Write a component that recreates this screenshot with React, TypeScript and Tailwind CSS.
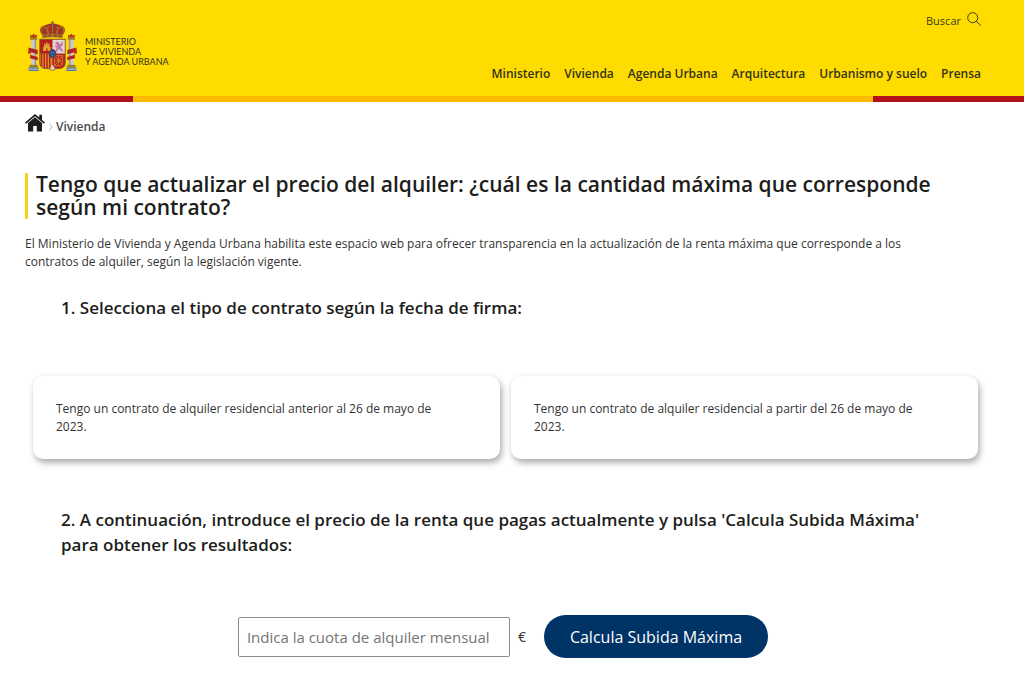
import { useState } from "react";

const navItems = [
  "Ministerio",
  "Vivienda",
  "Agenda Urbana",
  "Arquitectura",
  "Urbanismo y suelo",
  "Prensa",
];

const contracts = [
  { id: "before", text: "Tengo un contrato de alquiler residencial anterior al 26 de mayo de 2023." },
  { id: "after", text: "Tengo un contrato de alquiler residencial a partir del 26 de mayo de 2023." },
];

function Pillar({ side }: { side: "left" | "right" }) {
  return (
    <g transform={side === "right" ? "translate(48 0) scale(-1 1)" : undefined}>
      {/* crown and capital */}
      <path d="M2.500 16.500 2 13.500l2 .8 1.500-2 1.500 2 2-.8-.5 3z" fill="#a93a24" />
      <rect x="2" y="16.500" width="7" height="2" fill="#9c7a2c" />
      {/* shaft */}
      <rect x="3" y="18.500" width="5" height="25" fill="#cfc8c4" />
      <rect x="6.400" y="18.500" width="1.600" height="25" fill="#9d9593" />
      {/* ribbon */}
      <path d="M.5 26 9.500 28.500v4L.5 30zM2 33l7.500 2.200v3.200L2 36.500z" fill="#b3261e" />
      <path d="M0 29h3v3H0z" fill="#c4371d" />
      {/* base and waves */}
      <rect x="1.500" y="43" width="8" height="2.500" fill="#9c7a2c" />
      <rect x=".5" y="45.500" width="10" height="3.500" fill="#55759a" />
      <path d="M.5 47.200h10" stroke="#dfe3e4" strokeWidth=".8" />
    </g>
  );
}

function CoatOfArms() {
  return (
    <svg viewBox="0 0 48 50" className="h-[51px] w-[49px] shrink-0" aria-hidden="true">
      <Pillar side="left" />
      <Pillar side="right" />

      {/* royal crown */}
      <path d="M14.500 14.500C10 10 11.500 5 16.500 4.500 19 3 22 2.500 24 2.500s5 .5 7.500 2c5 .5 6.500 5.500 2 10z" fill="#a8321f" />
      <path
        d="M15 14C11 9 13.500 5 17 6.500S20 12 20 14M33 14c4-5 1.500-9-2-7.500S28 12 28 14M24 3v11M20 5c-2 3-1 6 0 8M28 5c2 3 1 6 0 8"
        fill="none"
        stroke="#98772c"
        strokeWidth="1.100"
      />
      <path d="M24 0v3.500M22.600 1.500h2.800" stroke="#8a6a22" strokeWidth="1" />
      <circle cx="24" cy="3.800" r="1.200" fill="#4d6b78" />
      <path d="M14 13.500q10-2 20 0v3.200q-10-1.500-20 0z" fill="#9b7127" />
      <path d="M16 15h2M20 14.600h2M26 14.600h2M30 15h2" stroke="#a9221d" strokeWidth="1.200" />

      {/* shield */}
      <path d="M11 17.500h26V41c0 4-3 6-6 6h-3.500L24 49l-3.500-2H17c-3 0-6-2-6-6z" fill="#8e5d25" />
      <path d="M12 18.500h12V32H12z" fill="#b81b1e" />
      <path d="M24 18.500h12V32H24z" fill="#e3d7d8" />
      <path d="M12 32h12v15c-1-1-2-1-3.500-1H17c-3 0-5-2-5-5z" fill="#d99b20" />
      <path d="M13.200 32v12M15.900 32v14M18.600 32v14M21.300 32v14" stroke="#b92020" strokeWidth="1.500" />
      <path d="M24 32h12v9c0 3-2 5-5 5h-3.500c-1.500 0-2.500 0-3.500 1z" fill="#b81e20" />
      {/* castle */}
      <path d="M14.800 29.500v-4h1V22h1.300v1.200h.6V21h1.500v2.200h.6V22h1.300v3.500h1v4h-3v-2.500h-1.300v2.500z" fill="#deaa2b" />
      {/* lion */}
      <path
        d="M26.500 21.500l2-1.500 2 1 .3 1.500 1.700-.3.500-2 1.500.5-.6 3.300-1.600 1.300 1 2.200 1.400 2.500h-2.400l-1.800-2.800-1.400 2.800h-2.400l1.500-3.800-2-.8.300-1.400 1.800.2-.3-1.200z"
        fill="#c277a6"
      />
      {/* chains */}
      <path
        d="M26 34h8v6.500c0 2-1 3.500-3 3.500h-5zM26 34l8 9M34 34l-8 10M30 34v10M26 39h8"
        fill="none"
        stroke="#d48a2b"
        strokeWidth=".8"
      />
      <path d="M21.500 46.500 24 43l2.500 3.500L24 48.500z" fill="#ddd0b7" />
      <ellipse cx="24" cy="32" rx="3.900" ry="4.500" fill="#a92a2b" />
      <ellipse cx="24" cy="32" rx="3.100" ry="3.700" fill="#1e5790" />
      <path d="M22.700 31h.8M24.500 31h.8M23.600 33.500h.8" stroke="#d9b84a" strokeWidth=".8" />
    </svg>
  );
}

function HomeIcon() {
  return (
    <svg viewBox="0 0 20 18" className="h-[18px] w-5" fill="#1d1d1b" aria-hidden="true">
      <path d="M10 0 0 8.500l1.100 1.300L10 2.300l8.900 7.500L20 8.500l-3-2.600V.8h-2.700v2.800z" />
      <path d="M10 3.200 3 9.100v8.400h5.200v-5.500h3.600v5.500H17V9.100z" />
    </svg>
  );
}

function SearchIcon() {
  return (
    <svg viewBox="0 0 14 14" className="h-3.5 w-3.5" fill="none" stroke="#3c3c1c" aria-hidden="true">
      <circle cx="5.700" cy="5.700" r="5" />
      <path d="m9.300 9.300 4.200 4" strokeLinecap="round" />
    </svg>
  );
}

function Header() {
  return (
    <header>
      <div className="flex h-24 justify-between bg-[#ffdc00] pr-[43px] pl-7">
        <a href="#" className="flex items-start pt-[21px]">
          <CoatOfArms />
          <span className="mt-4 ml-2 font-[Lato,sans-serif] text-[9px] leading-[10px] whitespace-nowrap text-[#33331a]">
            MINISTERIO
            <br />
            DE VIVIENDA
            <br />Y AGENDA URBANA
          </span>
        </a>
        <div className="flex flex-col items-end justify-between pt-3 pb-3">
          <a href="#" className="flex items-start gap-1.5 text-[11px] leading-[18px] text-[#3c3c1c]">
            Buscar
            <SearchIcon />
          </a>
          <nav className="flex gap-3.5 text-xs leading-5 font-semibold whitespace-nowrap text-[#33331a]">
            {navItems.map((item) => (
              <a key={item} href="#">
                {item}
              </a>
            ))}
          </nav>
        </div>
      </div>
      {/* flag stripe */}
      <div className="flex h-1.5">
        <div className="w-[13%] bg-[#b01218]" />
        <div className="flex-1 bg-[#fbba00]" />
        <div className="w-[14.7%] bg-[#b01218]" />
      </div>
    </header>
  );
}

export default function App() {
  const [contract, setContract] = useState("");
  const [rent, setRent] = useState("");

  return (
    <div className="bg-white font-['Open_Sans',sans-serif] text-[#333]">
      <Header />

      <main className="px-[25px]">
        <nav className="flex items-start pt-3" aria-label="Ruta">
          <a href="#" aria-label="Inicio">
            <HomeIcon />
          </a>
          <svg viewBox="0 0 4 8" className="mt-[9px] ml-1 h-2 w-1" fill="none" stroke="#b8b8b8" aria-hidden="true">
            <path d="m.5.5 2.500 3.500-2.500 3.500" />
          </svg>
          <a href="#" className="mt-[3px] ml-[3px] text-xs leading-5 font-semibold text-[#4a4a4a]">
            Vivienda
          </a>
        </nav>

        <h1 className="mt-9 border-l-[3px] border-[#f9cf1c] pr-10 pl-2 text-[21px] leading-[23px] font-semibold text-[#1d1d1b]">
          Tengo que actualizar el precio del alquiler: ¿cuál es la cantidad máxima que corresponde según mi contrato?
        </h1>
        <p className="mt-4 pr-16 text-xs leading-[18px]">
          El Ministerio de Vivienda y Agenda Urbana habilita este espacio web para ofrecer transparencia en la
          actualización de la renta máxima que corresponde a los contratos de alquiler, según la legislación vigente.
        </p>

        <h2 className="mt-6 pr-16 pl-9 text-[17px] leading-[25px] font-semibold text-[#1d1d1b]">
          1. Selecciona el tipo de contrato según la fecha de firma:
        </h2>
        <div className="mt-14 grid grid-cols-2 gap-[11px] pr-[21px] pl-2">
          {contracts.map(({ id, text }) => (
            <button
              key={id}
              type="button"
              aria-pressed={contract === id}
              onClick={() => setContract(id)}
              className="rounded-[10px] bg-white pt-6 pr-12 pb-[23px] pl-[23px] text-left text-xs leading-[18px] shadow-[2px_4px_6px_rgba(0,0,0,0.3),0_0_6px_rgba(0,0,0,0.05)]"
            >
              {text}
            </button>
          ))}
        </div>

        <form onSubmit={(e) => e.preventDefault()}>
          <h2 className="mt-12 pr-16 pl-9 text-[17px] leading-[25px] font-semibold text-[#1d1d1b]">
            2. A continuación, introduce el precio de la renta que pagas actualmente y pulsa 'Calcula Subida Máxima'
            para obtener los resultados:
          </h2>
          <div className="mt-[58px] flex items-center justify-center pr-[18px] pb-4">
            <input
              id="rent"
              type="text"
              value={rent}
              onChange={(e) => setRent(e.target.value)}
              placeholder="Indica la cuota de alquiler mensual"
              className="h-10 w-[272px] rounded-xs border border-[#8c8c8c] px-2 text-[15px] placeholder:text-[#757575]"
            />
            <label htmlFor="rent" aria-label="Cuota de alquiler en euros" className="ml-2 text-sm">
              €
            </label>
            <button type="submit" className="ml-[18px] h-[43px] rounded-full bg-[#003366] px-[26px] text-base text-white">
              Calcula Subida Máxima
            </button>
          </div>
        </form>
      </main>
    </div>
  );
}
